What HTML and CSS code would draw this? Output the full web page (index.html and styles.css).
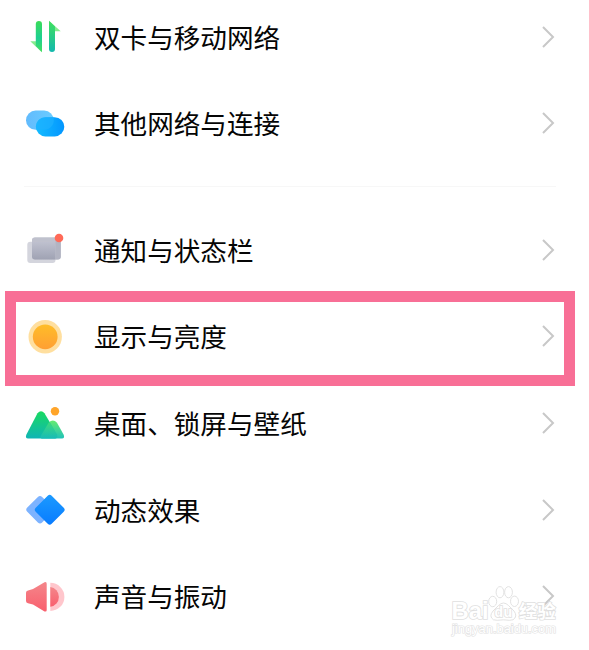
FILE: index.html
```html
<!DOCTYPE html>
<html lang="zh-CN">
<head>
<meta charset="utf-8">
<title>设置</title>
<link rel="stylesheet" href="styles.css">
</head>
<body>
<main class="settings">
  <div class="row">
    <svg class="icon" viewBox="0 0 50 50">
      <defs>
        <linearGradient id="up" x1="0" y1="0" x2="0" y2="1"><stop offset="0" stop-color="#3fe05c"/><stop offset="1" stop-color="#13b8ae"/></linearGradient>
        <linearGradient id="down" x1="0" y1="0" x2="0" y2="1"><stop offset="0" stop-color="#3bdc58"/><stop offset=".55" stop-color="#1dcf92"/><stop offset="1" stop-color="#45df60"/></linearGradient>
      </defs>
      <path d="M10.3 29.3H17L21.8 40.2Z" fill="#85ec8e"/>
      <path d="M15.8 12a3.1 3.1 0 0 1 6.2 0V40.2L15.8 34Z" fill="url(#down)"/>
      <path d="M29 8.7L40.7 19.3H33Z" fill="#85ec8e"/>
      <path d="M29 8.7L35 14.5V37a3 3 0 0 1-6 0Z" fill="url(#up)"/>
    </svg>
    <span class="label">双卡与移动网络</span>
    <svg class="chevron" viewBox="0 0 14 24"><path d="M2 2L12 12L2 22"/></svg>
  </div>
  <div class="row">
    <svg class="icon" viewBox="0 0 50 50">
      <defs>
        <linearGradient id="cloud"><stop offset="0" stop-color="#14bcff"/><stop offset="1" stop-color="#0396ff"/></linearGradient>
        <linearGradient id="haze"><stop offset="0" stop-color="#62bbfd"/><stop offset="1" stop-color="#6accff"/></linearGradient>
      </defs>
      <rect x="6" y="11.6" width="27.8" height="19.2" rx="9.6" fill="url(#haze)"/>
      <rect x="15.8" y="18.2" width="28.5" height="19.2" rx="9.6" fill="url(#cloud)"/>
      <path d="M25.4 18.2H33.4A9.6 9.6 0 0 1 24.2 30.8H16.6A9.6 9.6 0 0 1 25.4 18.2Z" fill="#20b0ff" opacity=".65"/>
    </svg>
    <span class="label">其他网络与连接</span>
    <svg class="chevron" viewBox="0 0 14 24"><path d="M2 2L12 12L2 22"/></svg>
  </div>
  <div class="divider"></div>
  <div class="row">
    <svg class="icon" viewBox="0 0 50 50">
      <defs><linearGradient id="card" x1="0" y1="0" x2="0" y2="1"><stop offset="0" stop-color="#bfc1cf"/><stop offset="1" stop-color="#9fa2b3"/></linearGradient></defs>
      <rect x="7.3" y="16.8" width="28.2" height="21.3" rx="3" fill="#d4d5dd"/>
      <rect x="12" y="12.4" width="28.8" height="22.2" rx="3" fill="#c3c5d0"/>
      <path d="M12 16.8H35.5V34.6H15a3 3 0 0 1-3-3Z" fill="url(#card)"/>
      <path d="M15 12.4H35.5V16.8H12V15.4a3 3 0 0 1 3-3Z" fill="#bfc1cd"/>
      <path d="M35.5 12.4H37.8a3 3 0 0 1 3 3V31.6a3 3 0 0 1-3 3H35.5Z" fill="#b2b4c2"/>
      <circle cx="39" cy="13" r="4.3" fill="#ff6a58"/>
    </svg>
    <span class="label">通知与状态栏</span>
    <svg class="chevron" viewBox="0 0 14 24"><path d="M2 2L12 12L2 22"/></svg>
  </div>
  <div class="row highlighted">
    <svg class="icon" viewBox="0 0 50 50">
      <defs><linearGradient id="sun" x1="0" y1="0" x2="0" y2="1"><stop offset="0" stop-color="#ffbd28"/><stop offset="1" stop-color="#ff9f33"/></linearGradient></defs>
      <circle cx="25.2" cy="24.8" r="16.7" fill="#ffdf9f"/>
      <circle cx="25.2" cy="24.8" r="12.4" fill="url(#sun)"/>
    </svg>
    <span class="label">显示与亮度</span>
    <svg class="chevron" viewBox="0 0 14 24"><path d="M2 2L12 12L2 22"/></svg>
  </div>
  <div class="row">
    <svg class="icon" viewBox="0 0 50 50">
      <defs>
        <linearGradient id="peak" x1="0" y1="0" x2="0" y2="1"><stop offset="0" stop-color="#19da61"/><stop offset="1" stop-color="#10b5b5"/></linearGradient>
        <linearGradient id="hill" x1="0" y1="0" x2="0" y2="1"><stop offset="0" stop-color="#66eb70"/><stop offset="1" stop-color="#20c2b8"/></linearGradient>
      </defs>
      <path d="M28.8 23.5Q33 19.3 37 23.8L43.7 35.8Q45 39.5 42 39.5H22Q19.5 39.5 21 36.5Z" fill="url(#hill)"/>
      <path d="M17.5 14.3Q21 10.2 24.5 14.3L37 35.5Q38 39.5 35 39.5H8Q5 39.5 6.3 35.8Z" fill="url(#peak)"/>
      <path d="M28.8 23.5L29.6 22.9L37 35.5Q38 39.5 35 39.5H22Q19.5 39.5 21 36.5Z" fill="url(#hill)" opacity=".5"/>
      <circle cx="35" cy="12.3" r="4.2" fill="#ffa52a"/>
    </svg>
    <span class="label">桌面、锁屏与壁纸</span>
    <svg class="chevron" viewBox="0 0 14 24"><path d="M2 2L12 12L2 22"/></svg>
  </div>
  <div class="row">
    <svg class="icon" viewBox="0 0 50 50">
      <defs><linearGradient id="tile" x1="0" y1="0" x2="1" y2="1"><stop offset="0" stop-color="#1c9bff"/><stop offset="1" stop-color="#087bff"/></linearGradient></defs>
      <rect x="9.5" y="14.2" width="21" height="21" rx="3" transform="rotate(45 20 24.7)" fill="#7db3ff"/>
      <rect x="18.4" y="13.4" width="22.6" height="22.6" rx="2.8" transform="rotate(45 29.7 24.7)" fill="url(#tile)"/>
    </svg>
    <span class="label">动态效果</span>
    <svg class="chevron" viewBox="0 0 14 24"><path d="M2 2L12 12L2 22"/></svg>
  </div>
  <div class="row">
    <svg class="icon" viewBox="0 0 50 50">
      <defs><linearGradient id="horn" x1="0" y1="0" x2="0" y2="1"><stop offset="0" stop-color="#f4868a"/><stop offset="1" stop-color="#f95f6e"/></linearGradient></defs>
      <path d="M8 18.5L13 17L24.5 10.3Q26.7 9.5 26.7 11.8V38Q26.7 40.2 24.5 39.4L13 32.5L8 31.2Q6 30.8 6 29V20.7Q6 18.8 8 18.5Z" fill="url(#horn)"/>
      <path d="M30.3 10.8A14.1 14.1 0 0 1 30.3 39Z" fill="#ffc6cc"/>
      <path d="M30.3 15A10 10 0 0 1 30.3 34.8Z" fill="url(#horn)"/>
    </svg>
    <span class="label">声音与振动</span>
    <svg class="chevron" viewBox="0 0 14 24"><path d="M2 2L12 12L2 22"/></svg>
  </div>
</main>
<svg class="watermark" viewBox="0 0 116 60">
  <g class="outline">
    <text class="brand" x="5.5" y="37.5" textLength="37" lengthAdjust="spacingAndGlyphs">Bai</text>
    <ellipse cx="46.7" cy="20.5" rx="4" ry="5.2"/>
    <ellipse cx="54" cy="11.2" rx="3.9" ry="5.6"/>
    <ellipse cx="62.5" cy="11.2" rx="3.9" ry="5.6"/>
    <ellipse cx="68.5" cy="20.3" rx="4" ry="5.2"/>
    <path d="M52.5 24.5Q57.5 19.5 62.5 24.5L68 30Q72 35.5 67 38.8Q64.5 39.8 57.5 38.8Q50 39.8 47.5 38.8Q42.5 35.5 47 30Z"/>
    <text class="du" x="48.5" y="36" textLength="17.5">du</text>
    <text class="cjk" x="72.7" y="36.5" textLength="37">经验</text>
  </g>
  <text class="url" x="6" y="52" textLength="104" lengthAdjust="spacingAndGlyphs">jingyan.baidu.com</text>
</svg>
</body>
</html>
```
FILE: styles.css
```css
body {
  margin: 0;
  height: 650px;
  overflow: hidden;
  position: relative;
  background: #fff;
  color: #050505;
  font-family: "Noto Sans CJK SC", sans-serif;
}

.settings {
  display: flex;
  flex-direction: column;
  margin-top: -6.3px;
}

.row {
  position: relative;
  display: flex;
  align-items: center;
  height: 86.6px;
  padding: 0 34px 0 20px;
}

.icon {
  width: 50px;
  height: 50px;
  flex: none;
}

.label {
  flex: 1;
  margin: -1px 0 0 24px;
  font-size: 26.6px;
  line-height: 40px;
  white-space: nowrap;
}

.chevron {
  width: 14px;
  height: 24px;
  flex: none;
  margin-top: -1px;
}

.chevron path {
  fill: none;
  stroke: #c8c8c8;
  stroke-width: 2;
}

.divider {
  height: 1px;
  margin: 19.6px 33px 19.6px 24px;
  background: #f7f7f7;
}

/* The frame extends over the neighbouring rows. */
.highlighted::after {
  content: "";
  position: absolute;
  left: 5px;
  right: 14px;
  top: -3px;
  height: 73px;
  border: 11px solid #f86f96;
}

.watermark {
  position: absolute;
  left: 446px;
  top: 581px;
  width: 116px;
  height: 60px;
}

.outline {
  fill: #fff;
  fill-opacity: .75;
  stroke: #dfdfdf;
  stroke-width: .9;
}

.outline text {
  fill-opacity: 1;
  stroke-width: 1.6;
  paint-order: stroke;
}

.brand {
  font: bold 23px "Liberation Sans", sans-serif;
}

.du {
  font: bold 14px "Liberation Sans", sans-serif;
}

.cjk {
  font: bold 18.5px "Noto Sans CJK SC", sans-serif;
}

.url {
  font: 12px/1 "Liberation Sans", sans-serif;
  fill: #fff;
  stroke: #e2e2e2;
  stroke-width: 1.2;
  paint-order: stroke;
}
```
